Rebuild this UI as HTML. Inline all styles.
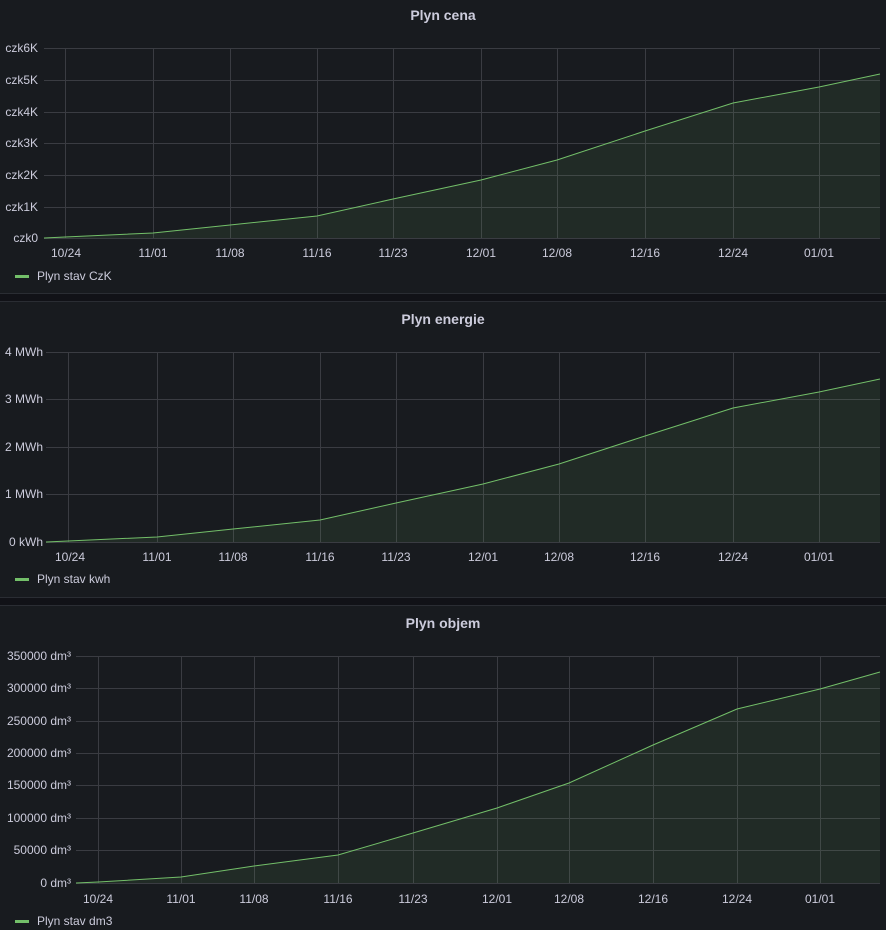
<!DOCTYPE html>
<html><head><style>
html,body{margin:0;padding:0;background:#111217;}
svg{display:block}
text{font-family:"Liberation Sans",Arial,sans-serif;fill:#ccccdc}
</style></head><body>
<svg width="886" height="930" viewBox="0 0 886 930">
<rect x="0" y="0" width="886" height="930" fill="#111217"/>
<rect x="0" y="0" width="886" height="293" fill="#181b1f"/>
<rect x="0" y="302" width="886" height="295" fill="#181b1f"/>
<rect x="0" y="606" width="886" height="324" fill="#181b1f"/>
<line x1="0" y1="293.5" x2="886" y2="293.5" stroke="#2a2d33"/>
<line x1="0" y1="301.5" x2="886" y2="301.5" stroke="#2a2d33"/>
<line x1="0" y1="597.5" x2="886" y2="597.5" stroke="#2a2d33"/>
<line x1="0" y1="605.5" x2="886" y2="605.5" stroke="#2a2d33"/>

<!-- Panel 1 -->
<text x="443" y="20" font-size="14" font-weight="bold" text-anchor="middle">Plyn cena</text>
<g stroke="#3a3c42" stroke-width="1">
<line x1="44" y1="48.5" x2="880" y2="48.5"/><line x1="44" y1="80.5" x2="880" y2="80.5"/>
<line x1="44" y1="112.5" x2="880" y2="112.5"/><line x1="44" y1="143.5" x2="880" y2="143.5"/>
<line x1="44" y1="175.5" x2="880" y2="175.5"/><line x1="44" y1="207.5" x2="880" y2="207.5"/>
<line x1="44" y1="238.5" x2="880" y2="238.5"/>
<line x1="65.5" y1="48" x2="65.5" y2="238"/><line x1="153.5" y1="48" x2="153.5" y2="238"/>
<line x1="230.5" y1="48" x2="230.5" y2="238"/><line x1="317.5" y1="48" x2="317.5" y2="238"/>
<line x1="393.5" y1="48" x2="393.5" y2="238"/><line x1="481.5" y1="48" x2="481.5" y2="238"/>
<line x1="557.5" y1="48" x2="557.5" y2="238"/><line x1="645.5" y1="48" x2="645.5" y2="238"/>
<line x1="733.5" y1="48" x2="733.5" y2="238"/><line x1="819.5" y1="48" x2="819.5" y2="238"/>
</g>
<g font-size="12" text-anchor="end">
<text x="38" y="52">czk6K</text><text x="38" y="84">czk5K</text><text x="38" y="116">czk4K</text>
<text x="38" y="147">czk3K</text><text x="38" y="179">czk2K</text><text x="38" y="211">czk1K</text>
<text x="38" y="242">czk0</text></g>
<g font-size="12" text-anchor="middle">
<text x="66" y="257">10/24</text><text x="153" y="257">11/01</text><text x="230" y="257">11/08</text>
<text x="317" y="257">11/16</text><text x="393" y="257">11/23</text><text x="481" y="257">12/01</text>
<text x="557" y="257">12/08</text><text x="645" y="257">12/16</text><text x="733" y="257">12/24</text>
<text x="819" y="257">01/01</text></g>
<polygon points="44,238 65,237 153,233 230,225 317,216 393,199 481,180 557,160 645,131 733,103 819,87 880,74 880,238" fill="#73bf69" fill-opacity="0.1"/>
<polyline points="44,238 65,237 153,233 230,225 317,216 393,199 481,180 557,160 645,131 733,103 819,87 880,74" fill="none" stroke="#73bf69" stroke-width="1"/>
<rect x="15" y="275" width="14" height="3" fill="#73bf69"/>
<text x="37" y="280" font-size="12">Plyn stav CzK</text>

<!-- Panel 2 -->
<text x="443" y="324" font-size="14" font-weight="bold" text-anchor="middle">Plyn energie</text>
<g stroke="#3a3c42" stroke-width="1">
<line x1="46" y1="352.5" x2="880" y2="352.5"/><line x1="46" y1="399.5" x2="880" y2="399.5"/>
<line x1="46" y1="447.5" x2="880" y2="447.5"/><line x1="46" y1="494.5" x2="880" y2="494.5"/>
<line x1="46" y1="542.5" x2="880" y2="542.5"/>
<line x1="68.5" y1="352" x2="68.5" y2="542"/><line x1="157.5" y1="352" x2="157.5" y2="542"/>
<line x1="233.5" y1="352" x2="233.5" y2="542"/><line x1="320.5" y1="352" x2="320.5" y2="542"/>
<line x1="396.5" y1="352" x2="396.5" y2="542"/><line x1="483.5" y1="352" x2="483.5" y2="542"/>
<line x1="559.5" y1="352" x2="559.5" y2="542"/><line x1="645.5" y1="352" x2="645.5" y2="542"/>
<line x1="733.5" y1="352" x2="733.5" y2="542"/><line x1="819.5" y1="352" x2="819.5" y2="542"/>
</g>
<g font-size="12" text-anchor="end">
<text x="43" y="356">4 MWh</text><text x="43" y="403">3 MWh</text><text x="43" y="451">2 MWh</text>
<text x="43" y="498">1 MWh</text><text x="43" y="546">0 kWh</text></g>
<g font-size="12" text-anchor="middle">
<text x="70" y="561">10/24</text><text x="157" y="561">11/01</text><text x="233" y="561">11/08</text>
<text x="320" y="561">11/16</text><text x="396" y="561">11/23</text><text x="483" y="561">12/01</text>
<text x="559" y="561">12/08</text><text x="645" y="561">12/16</text><text x="733" y="561">12/24</text>
<text x="819" y="561">01/01</text></g>
<polygon points="46,542 68,541 157,537 233,529 320,520 396,503 483,484 559,464 645,436 733,408 819,392 880,379 880,542" fill="#73bf69" fill-opacity="0.1"/>
<polyline points="46,542 68,541 157,537 233,529 320,520 396,503 483,484 559,464 645,436 733,408 819,392 880,379" fill="none" stroke="#73bf69" stroke-width="1"/>
<rect x="15" y="578" width="14" height="3" fill="#73bf69"/>
<text x="37" y="583" font-size="12">Plyn stav kwh</text>

<!-- Panel 3 -->
<text x="443" y="628" font-size="14" font-weight="bold" text-anchor="middle">Plyn objem</text>
<g stroke="#3a3c42" stroke-width="1">
<line x1="76" y1="656.5" x2="880" y2="656.5"/><line x1="76" y1="688.5" x2="880" y2="688.5"/>
<line x1="76" y1="721.5" x2="880" y2="721.5"/><line x1="76" y1="753.5" x2="880" y2="753.5"/>
<line x1="76" y1="785.5" x2="880" y2="785.5"/><line x1="76" y1="818.5" x2="880" y2="818.5"/>
<line x1="76" y1="850.5" x2="880" y2="850.5"/><line x1="76" y1="883.5" x2="880" y2="883.5"/>
<line x1="98.5" y1="656" x2="98.5" y2="883"/><line x1="181.5" y1="656" x2="181.5" y2="883"/>
<line x1="254.5" y1="656" x2="254.5" y2="883"/><line x1="338.5" y1="656" x2="338.5" y2="883"/>
<line x1="413.5" y1="656" x2="413.5" y2="883"/><line x1="497.5" y1="656" x2="497.5" y2="883"/>
<line x1="569.5" y1="656" x2="569.5" y2="883"/><line x1="653.5" y1="656" x2="653.5" y2="883"/>
<line x1="737.5" y1="656" x2="737.5" y2="883"/><line x1="820.5" y1="656" x2="820.5" y2="883"/>
</g>
<g font-size="12" text-anchor="end">
<text x="71" y="660">350000 dm³</text><text x="71" y="692">300000 dm³</text><text x="71" y="725">250000 dm³</text>
<text x="71" y="757">200000 dm³</text><text x="71" y="789">150000 dm³</text><text x="71" y="822">100000 dm³</text>
<text x="71" y="854">50000 dm³</text><text x="71" y="887">0 dm³</text></g>
<g font-size="12" text-anchor="middle">
<text x="98" y="903">10/24</text><text x="181" y="903">11/01</text><text x="254" y="903">11/08</text>
<text x="338" y="903">11/16</text><text x="413" y="903">11/23</text><text x="497" y="903">12/01</text>
<text x="569" y="903">12/08</text><text x="653" y="903">12/16</text><text x="737" y="903">12/24</text>
<text x="820" y="903">01/01</text></g>
<polygon points="76,883 98,882 181,877 254,866 338,855 413,833 497,808 569,783 653,745 737,709 820,689 880,672 880,883" fill="#73bf69" fill-opacity="0.1"/>
<polyline points="76,883 98,882 181,877 254,866 338,855 413,833 497,808 569,783 653,745 737,709 820,689 880,672" fill="none" stroke="#73bf69" stroke-width="1"/>
<rect x="15" y="920" width="14" height="3" fill="#73bf69"/>
<text x="37" y="925" font-size="12">Plyn stav dm3</text>
</svg>
</body></html>
